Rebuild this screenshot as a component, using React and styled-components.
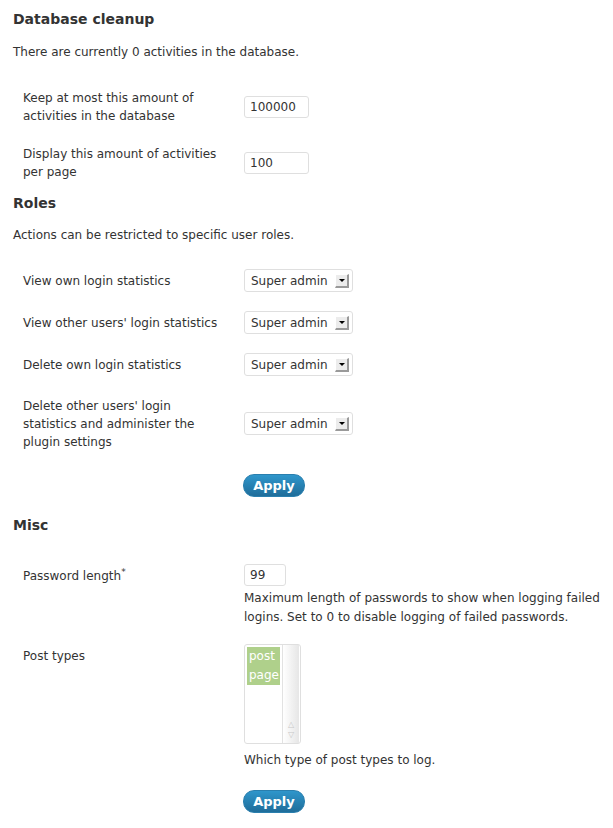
import styled, { createGlobalStyle } from 'styled-components'

const GlobalStyle = createGlobalStyle`
  html, body {
    margin: 0;
    padding: 0;
    background: #ffffff;
  }
  body {
    font-family: "DejaVu Sans", "Liberation Sans", sans-serif;
    font-size: 12px;
    color: #333333;
  }
`;

const Page = styled.div`
  padding: 11px 0 14px 13px;
  width: 600px;
`;

const Heading = styled.h3`
  font-size: 14px;
  font-weight: bold;
  line-height: 17px;
  margin: ${(props) => props.top || 0}px 0 0;
  color: #333333;
`;

const Intro = styled.p`
  margin: ${(props) => props.top || 15}px 0 0;
  line-height: 18px;
`;

const FormTable = styled.table`
  border-collapse: collapse;
  border-spacing: 0;
  margin-top: ${(props) => props.top || 0}px;
`;

const Label = styled.th`
  width: 205px;
  min-width: 205px;
  padding: ${(props) => props.pad || 10}px 16px ${(props) => props.pad || 10}px 10px;
  text-align: left;
  font-weight: normal;
  line-height: 18px;
  vertical-align: ${(props) => (props.top ? 'top' : 'middle')};
`;

const Field = styled.td`
  padding: ${(props) => props.pad || '9px 0'};
  vertical-align: ${(props) => (props.top ? 'top' : 'middle')};
`;

const TextInput = styled.input`
  box-sizing: border-box;
  width: ${(props) => props.w}px;
  height: 22px;
  border: 1px solid #dfdfdf;
  border-radius: 3px;
  padding: 0 5px;
  font-family: "DejaVu Sans", sans-serif;
  font-size: 12px;
  color: #333333;
  background: #ffffff;
  outline: none;
  display: block;
`;

const Select = styled.div`
  box-sizing: border-box;
  width: 109px;
  height: 23px;
  border: 1px solid #dfdfdf;
  border-radius: 3px;
  display: flex;
  align-items: center;
  justify-content: space-between;
  padding: 0 3px 0 6px;
  color: #333333;
  font-size: 12px;
`;

const ArrowBox = styled.span`
  box-sizing: border-box;
  width: 14px;
  height: 14px;
  background: #ececec;
  border-top: 1px solid #ffffff;
  border-left: 1px solid #ffffff;
  border-right: 2px solid #9a9a9a;
  border-bottom: 2px solid #9a9a9a;
  display: flex;
  align-items: center;
  justify-content: center;
  &::after {
    content: '';
    border-left: 3px solid transparent;
    border-right: 3px solid transparent;
    border-top: 3px solid #000000;
  }
`;

const Desc = styled.p`
  margin: ${(props) => props.top || 3}px 0 0;
  line-height: 19px;
  width: 362px;
`;

const ListBox = styled.div`
  box-sizing: border-box;
  width: 57px;
  height: 100px;
  border: 1px solid #dfdfdf;
  border-radius: 3px;
  display: flex;
  padding: 2px 1px 2px 2px;
`;

const Options = styled.div`
  flex: 1;
`;

const Option = styled.div`
  background: #afd08b;
  color: #ffffff;
  line-height: 19px;
  padding-left: 2px;
`;

const Scrollbar = styled.div`
  width: 16px;
  margin-left: 2px;
  margin-top: -2px;
  margin-bottom: -2px;
  background: linear-gradient(to right, #ffffff, #e6e6e6);
  border-left: 1px solid #e2e2e2;
  display: flex;
  flex-direction: column;
  justify-content: flex-end;
  align-items: center;
  padding-bottom: 3px;
  color: #c8c8c8;
  font-size: 8px;
  line-height: 10px;
`;

const Button = styled.button`
  box-sizing: border-box;
  height: 23px;
  width: 62px;
  margin-left: ${(props) => props.left || 0}px;
  margin-top: ${(props) => props.top || 0}px;
  border: 1px solid #2a7fae;
  border-radius: 11px;
  background: linear-gradient(#2f96cb, #1f6d9a);
  color: #ffffff;
  font-family: "DejaVu Sans", sans-serif;
  font-size: 13px;
  font-weight: bold;
  padding: 0;
  display: block;
  cursor: pointer;
`;

const Sup = styled.sup`
  font-size: 9px;
  line-height: 0;
`;

const roles = [
  { id: 1, label: "View own login statistics" },
  { id: 2, label: "View other users' login statistics" },
  { id: 3, label: "Delete own login statistics" },
  { id: 4, label: "Delete other users' login statistics and administer the plugin settings" },
];

const App = () => {
  return (
    <Page>
      <GlobalStyle />
      <Heading>Database cleanup</Heading>
      <Intro>There are currently 0 activities in the database.</Intro>
      <FormTable top={18}>
        <tbody>
          <tr>
            <Label>Keep at most this amount of activities in the database</Label>
            <Field>
              <TextInput w={65} defaultValue="100000" />
            </Field>
          </tr>
          <tr>
            <Label>Display this amount of activities per page</Label>
            <Field>
              <TextInput w={65} defaultValue="100" />
            </Field>
          </tr>
        </tbody>
      </FormTable>

      <Heading top={4}>Roles</Heading>
      <Intro top={14}>Actions can be restricted to specific user roles.</Intro>
      <FormTable top={16}>
        <tbody>
          {roles.map((r) => (
            <tr key={r.id}>
              <Label pad={11}>{r.label}</Label>
              <Field pad="9px 0 10px">
                <Select>
                  <span>Super admin</span>
                  <ArrowBox />
                </Select>
              </Field>
            </tr>
          ))}
        </tbody>
      </FormTable>
      <Button left={230} top={12}>Apply</Button>

      <Heading top={20}>Misc</Heading>
      <FormTable top={23}>
        <tbody>
          <tr>
            <Label top="1">
              Password length<Sup>*</Sup>
            </Label>
            <Field top="1" pad="7px 0 10px">
              <TextInput w={42} defaultValue="99" />
              <Desc>Maximum length of passwords to show when logging failed logins. Set to 0 to disable logging of failed passwords.</Desc>
            </Field>
          </tr>
          <tr>
            <Label top="1">Post types</Label>
            <Field top="1" pad="7px 0 10px">
              <ListBox>
                <Options>
                  <Option>post</Option>
                  <Option>page</Option>
                </Options>
                <Scrollbar>
                  <span>△</span>
                  <span>▽</span>
                </Scrollbar>
              </ListBox>
              <Desc top={7}>Which type of post types to log.</Desc>
            </Field>
          </tr>
        </tbody>
      </FormTable>
      <Button left={230} top={10}>Apply</Button>
    </Page>
  );
};

export default App
